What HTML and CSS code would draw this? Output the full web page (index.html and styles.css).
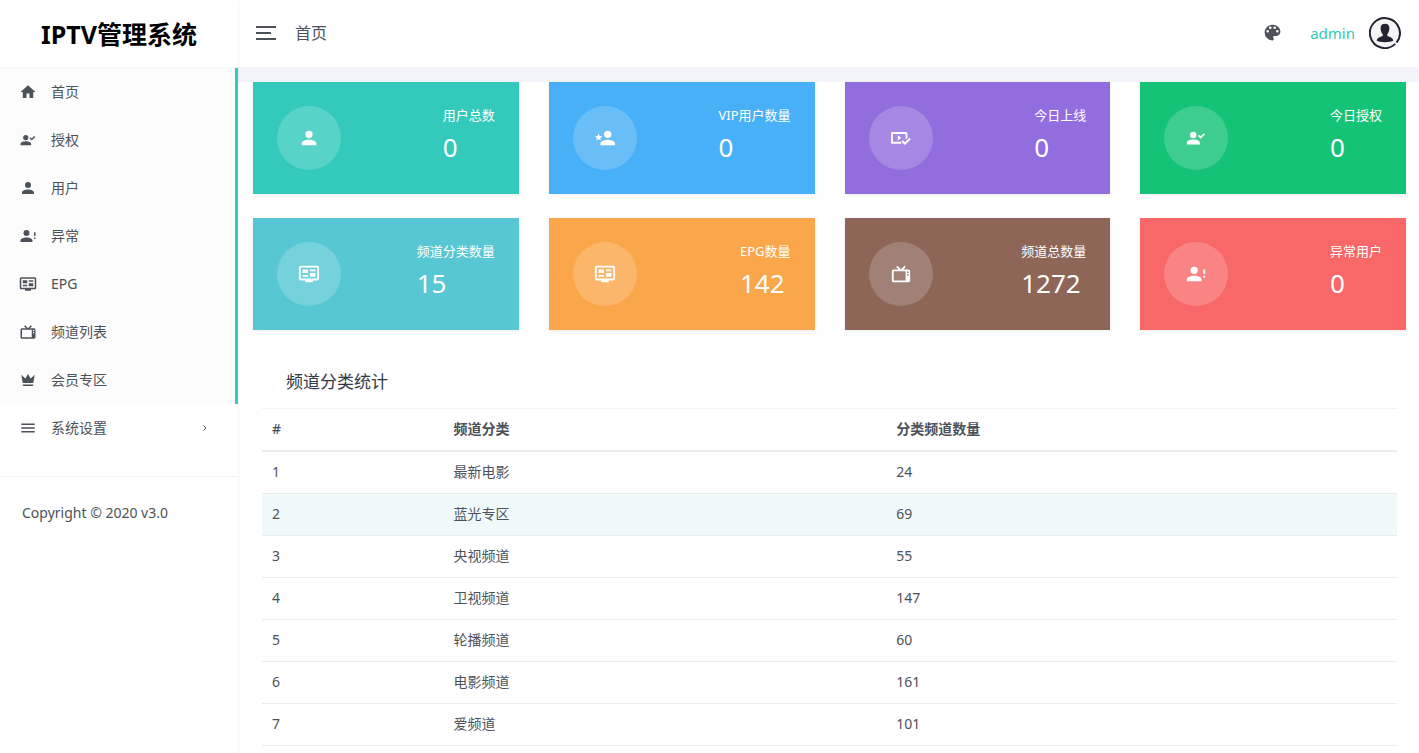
FILE: index.html
```html
<!DOCTYPE html>
<html lang="zh-CN">
<head>
<meta charset="utf-8">
<meta name="viewport" content="width=device-width, initial-scale=1">
<title>IPTV管理系统</title>
<link rel="stylesheet" href="styles.css">
</head>
<body>
<svg class="sprite" aria-hidden="true">
  <symbol id="home" viewBox="0 0 24 24"><path d="M10,20V14H14V20H19V12H22L12,3L2,12H5V20H10Z"/></symbol>
  <symbol id="account" viewBox="0 0 24 24"><path d="M12,4A4,4 0 0,1 16,8A4,4 0 0,1 12,12A4,4 0 0,1 8,8A4,4 0 0,1 12,4M12,14C16.42,14 20,15.79 20,18V20H4V18C4,15.79 7.58,14 12,14Z"/></symbol>
  <symbol id="account-check" viewBox="0 0 24 24"><path d="M9,5.2A3.5,3.5 0 0,1 12.5,8.7A3.5,3.5 0 0,1 9,12.2A3.5,3.5 0 0,1 5.5,8.7A3.5,3.5 0 0,1 9,5.2M9,13.7C12.6,13.7 16.2,14.9 16.2,17.2V19H2V17.2C2,14.9 5.4,13.7 9,13.7M20.5,6.7L21.8,8L17.1,12.700L14,9.700L15.300,8.400L17.100,10.100Z"/></symbol>
  <symbol id="account-alert" viewBox="0 0 24 24"><path d="M10,4A4,4 0 0,1 14,8A4,4 0 0,1 10,12A4,4 0 0,1 6,8A4,4 0 0,1 10,4M10,14C14.42,14 18,15.79 18,18V20H2V18C2,15.79 5.58,14 10,14M20,12V7H22V12H20M20,16V14H22V16H20Z"/></symbol>
  <symbol id="account-star" viewBox="0 0 24 24"><path d="M15,4A4,4 0 0,1 19,8A4,4 0 0,1 15,12A4,4 0 0,1 11,8A4,4 0 0,1 15,4M15,14C17.67,14 23,15.33 23,18V20H7V18C7,15.33 12.33,14 15,14M5,13.28L2.5,14.77L3.18,11.96L1,10.08L3.87,9.83L5,7.19L6.11,9.83L9,10.08L6.8,11.96L7.45,14.77Z"/></symbol>
  <symbol id="guide" viewBox="0 0 24 24"><path d="M21,17V5H3V17H21M21,3A2,2 0 0,1 23,5V17A2,2 0 0,1 21,19H16V21H8V19H3A2,2 0 0,1 1,17V5A2,2 0 0,1 3,3H21M5,7H11V11H5V7M5,13H11V15H5V13M13,7H19V9H13V7M13,11H19V15H13V11Z"/></symbol>
  <symbol id="tv" viewBox="0 0 24 24"><path d="M8.16,3L6.75,4.41L9.34,7H4C2.89,7 2,7.89 2,9V19C2,20.11 2.89,21 4,21H20C21.11,21 22,20.11 22,19V9C22,7.89 21.11,7 20,7H14.66L17.25,4.41L15.84,3L12,6.84L8.16,3M4,9H17V19H4V9M19.5,9A1,1 0 0,1 20.5,10A1,1 0 0,1 19.5,11A1,1 0 0,1 18.5,10A1,1 0 0,1 19.5,9M19.5,12A1,1 0 0,1 20.5,13A1,1 0 0,1 19.5,14A1,1 0 0,1 18.5,13A1,1 0 0,1 19.5,12Z"/></symbol>
  <symbol id="crown" viewBox="0 0 24 24"><path d="M5,16L3,5L8.5,10L12,4L15.5,10L21,5L19,16H5M19,19A1,1 0 0,1 18,20H6A1,1 0 0,1 5,19V18H19V19Z"/></symbol>
  <symbol id="menu" viewBox="0 0 24 24"><path d="M3,6H21V8H3V6M3,11H21V13H3V11M3,16H21V18H3V16Z"/></symbol>
  <symbol id="palette" viewBox="0 0 24 24"><path d="M17.5,12A1.5,1.5 0 0,1 16,10.5A1.5,1.5 0 0,1 17.5,9A1.5,1.5 0 0,1 19,10.5A1.5,1.5 0 0,1 17.5,12M14.5,8A1.5,1.5 0 0,1 13,6.5A1.5,1.5 0 0,1 14.5,5A1.5,1.5 0 0,1 16,6.5A1.5,1.5 0 0,1 14.5,8M9.5,8A1.5,1.5 0 0,1 8,6.5A1.5,1.5 0 0,1 9.5,5A1.5,1.5 0 0,1 11,6.5A1.5,1.5 0 0,1 9.5,8M6.5,12A1.5,1.5 0 0,1 5,10.5A1.5,1.5 0 0,1 6.5,9A1.5,1.5 0 0,1 8,10.5A1.5,1.5 0 0,1 6.5,12M12,3A9,9 0 0,0 3,12A9,9 0 0,0 12,21A1.5,1.5 0 0,0 13.5,19.5C13.5,19.11 13.35,18.76 13.11,18.5C12.88,18.23 12.73,17.88 12.73,17.5A1.5,1.5 0 0,1 14.23,16H16A5,5 0 0,0 21,11C21,6.58 16.97,3 12,3Z"/></symbol>
  <symbol id="video-check" viewBox="0 0 24 24"><path d="M3,5.5H17A2,2 0 0,1 19,7.500V12L17,13.500V7.500H3.200V16.200H11.500L13,18.200H1.200V5.500H3M8.500,9L12.500,11.800L8.500,14.600ZM21.200,11.800L22.700,13.300L16.300,19.600L12.500,16L14,14.500L16.300,16.600Z"/></symbol>
</svg>

<div class="layout">
  <aside class="sidebar">
    <a class="logo" href="#">IPTV管理系统</a>
    <nav class="nav">
      <ul class="nav-list">
        <li><a class="nav-link active" href="#"><svg class="nav-icon"><use href="#home"/></svg>首页</a></li>
        <li><a class="nav-link active" href="#"><svg class="nav-icon"><use href="#account-check"/></svg>授权</a></li>
        <li><a class="nav-link active" href="#"><svg class="nav-icon"><use href="#account"/></svg>用户</a></li>
        <li><a class="nav-link active" href="#"><svg class="nav-icon"><use href="#account-alert"/></svg>异常</a></li>
        <li><a class="nav-link active" href="#"><svg class="nav-icon"><use href="#guide"/></svg>EPG</a></li>
        <li><a class="nav-link active" href="#"><svg class="nav-icon"><use href="#tv"/></svg>频道列表</a></li>
        <li><a class="nav-link active" href="#"><svg class="nav-icon"><use href="#crown"/></svg>会员专区</a></li>
        <li><a class="nav-link" href="#"><svg class="nav-icon"><use href="#menu"/></svg>系统设置<svg class="chevron" viewBox="0 0 6 8"><path d="M1.500 1.500L4 4L1.500 6.500"/></svg></a></li>
      </ul>
    </nav>
    <p class="copyright">Copyright © 2020 v3.0</p>
  </aside>

  <div class="page">
    <header class="topbar">
      <button class="toggle" type="button" aria-label="菜单"><span class="bar"></span><span class="bar short"></span><span class="bar"></span></button>
      <span class="page-title">首页</span>
      <button class="theme" type="button" aria-label="主题"><svg class="theme-icon"><use href="#palette"/></svg></button>
      <a class="user" href="#">admin
        <svg class="avatar" viewBox="0 0 32 32" aria-hidden="true">
          <circle cx="16" cy="16" r="15" fill="#f5f5f5"/>
          <path d="M26.300 26.900A15 15 0 1 1 27.500 25.600" fill="none" stroke="#252432" stroke-width="2"/>
          <path d="M16 6.700C19 6.700 20.600 8.700 20.400 11.500C20.300 14.200 19.300 16 18.300 17.200V19C20.500 20 24 20.500 24.300 23.500C22.500 25.700 9.500 25.700 7.700 23.500C8 20.500 11.500 20 13.700 19V17.200C12.700 16 11.700 14.200 11.600 11.500C11.400 8.700 13 6.700 16 6.700Z" fill="#252432"/>
        </svg>
      </a>
    </header>
    <main class="content">
      <section class="cards">
        <article class="card teal"><span class="disc"><svg class="card-icon"><use href="#account"/></svg></span><div class="stat"><p class="label">用户总数</p><p class="value">0</p></div></article>
        <article class="card blue"><span class="disc"><svg class="card-icon"><use href="#account-star"/></svg></span><div class="stat"><p class="label">VIP用户数量</p><p class="value">0</p></div></article>
        <article class="card purple"><span class="disc"><svg class="card-icon"><use href="#video-check"/></svg></span><div class="stat"><p class="label">今日上线</p><p class="value">0</p></div></article>
        <article class="card green"><span class="disc"><svg class="card-icon"><use href="#account-check"/></svg></span><div class="stat"><p class="label">今日授权</p><p class="value">0</p></div></article>
        <article class="card cyan"><span class="disc"><svg class="card-icon"><use href="#guide"/></svg></span><div class="stat"><p class="label">频道分类数量</p><p class="value">15</p></div></article>
        <article class="card orange"><span class="disc"><svg class="card-icon"><use href="#guide"/></svg></span><div class="stat"><p class="label">EPG数量</p><p class="value">142</p></div></article>
        <article class="card brown"><span class="disc"><svg class="card-icon"><use href="#tv"/></svg></span><div class="stat"><p class="label">频道总数量</p><p class="value">1272</p></div></article>
        <article class="card red"><span class="disc"><svg class="card-icon"><use href="#account-alert"/></svg></span><div class="stat"><p class="label">异常用户</p><p class="value">0</p></div></article>
      </section>
      <section class="panel">
        <h2 class="panel-title">频道分类统计</h2>
        <table class="table">
          <thead><tr><th class="col-id" scope="col">#</th><th class="col-name" scope="col">频道分类</th><th scope="col">分类频道数量</th></tr></thead>
          <tbody>
            <tr><td>1</td><td>最新电影</td><td>24</td></tr>
            <tr class="hover"><td>2</td><td>蓝光专区</td><td>69</td></tr>
            <tr><td>3</td><td>央视频道</td><td>55</td></tr>
            <tr><td>4</td><td>卫视频道</td><td>147</td></tr>
            <tr><td>5</td><td>轮播频道</td><td>60</td></tr>
            <tr><td>6</td><td>电影频道</td><td>161</td></tr>
            <tr><td>7</td><td>爱频道</td><td>101</td></tr>
          </tbody>
        </table>
      </section>
    </main>
  </div>
</div>
</body>
</html>
```

FILE: styles.css
```css
* { box-sizing: border-box; }

body {
  margin: 0;
  background: #fff;
  color: #4d5259;
  font-family: "Noto Sans", "Noto Sans CJK SC", sans-serif;
  font-size: 14px;
  line-height: 22px;
}

p, ul, h2 { margin: 0; padding: 0; }
a { color: inherit; text-decoration: none; }
svg { display: block; fill: currentColor; }
button { padding: 0; border: 0; background: none; color: inherit; cursor: pointer; }

.sprite { display: none; }

.layout { display: flex; min-height: 100vh; }

/* Sidebar */
.sidebar {
  flex: none;
  z-index: 1;
  width: 238px;
  background: #fff;
  box-shadow: 0 0 4px rgba(0, 0, 0, 0.08);
}

.logo {
  display: flex;
  align-items: center;
  justify-content: center;
  height: 68px;
  border-bottom: 1px solid #f5f5f5;
  color: #000;
  font-size: 25px;
  font-weight: 700;
}

.nav { padding-bottom: 24px; border-bottom: 1px solid #f3f3f3; }
.nav-list { list-style: none; }

.nav-link {
  display: flex;
  align-items: center;
  gap: 14px;
  height: 48px;
  padding: 0 30px 0 19px;
}

.nav-link.active { background: #fcfcfc; border-right: 3px solid #33cabb; }
.nav-icon { width: 18px; height: 18px; }

.chevron {
  width: 6px;
  height: 8px;
  margin-left: auto;
  fill: none;
  stroke: currentColor;
}

.copyright { padding: 25px 22px; }

/* Top bar */
.page { flex: 1; min-width: 0; }

.topbar {
  display: flex;
  align-items: center;
  height: 67px;
  padding: 0 18px 2px;
  background: #fff;
  box-shadow: 0 1px 4px rgba(0, 0, 0, 0.06);
}

.toggle { display: grid; gap: 4px; width: 20px; }
.bar { height: 2px; background: #4d5259; }
.short { width: 15px; }
.page-title { margin-left: 19px; font-size: 16px; }
.theme { margin-left: auto; }
.theme-icon { width: 21px; height: 21px; }

.user {
  display: flex;
  align-items: center;
  gap: 14px;
  margin-left: 27px;
  color: #33cabb;
  font-size: 15px;
}

.avatar { width: 32px; height: 32px; }

/* Content */
.content {
  padding: 0 13px 0 15px;
  border-top: 15px solid #f4f5fa;
}

.cards {
  display: grid;
  grid-template-columns: repeat(4, 1fr);
  gap: 24px 30px;
}

.card {
  display: flex;
  align-items: center;
  justify-content: space-between;
  height: 112px;
  padding: 24px;
  color: #fff;
  box-shadow: 0 1px 4px rgba(0, 0, 0, 0.08);
}

.teal { background: #33cabb; }
.blue { background: #48b0f7; }
.purple { background: #926dde; }
.green { background: #15c377; }
.cyan { background: #57c7d4; }
.orange { background: #faa64b; }
.brown { background: #8d6658; }
.red { background: #f96868; }

.disc {
  display: grid;
  place-items: center;
  width: 64px;
  height: 64px;
  border-radius: 50%;
  background: rgba(255, 255, 255, 0.18);
}

.card-icon { width: 22px; height: 22px; }
.stat { display: grid; gap: 4px; padding-bottom: 3px; }
.label { font-size: 13px; line-height: 18px; }
.value { font-size: 26px; line-height: 39px; }

.panel { padding: 36px 9px 0; }

.panel-title {
  padding: 4px 24px 15px;
  color: #313944;
  font-size: 17px;
  font-weight: 400;
  line-height: 23px;
}

.table { width: 100%; border-collapse: collapse; table-layout: fixed; }
.table th, .table td { padding: 9px 10px 11px; border-top: 1px solid #ebebeb; text-align: left; line-height: 21px; }
.table th { border-top-color: #f3f3f3; border-bottom: 2px solid #ebebeb; font-weight: 700; }
.table .col-id { width: 16%; font-weight: 500; }
.col-name { width: 39%; }
.table tr:last-child td { border-bottom: 1px solid #ebebeb; }
.hover { background: #f0fafb; }
```
